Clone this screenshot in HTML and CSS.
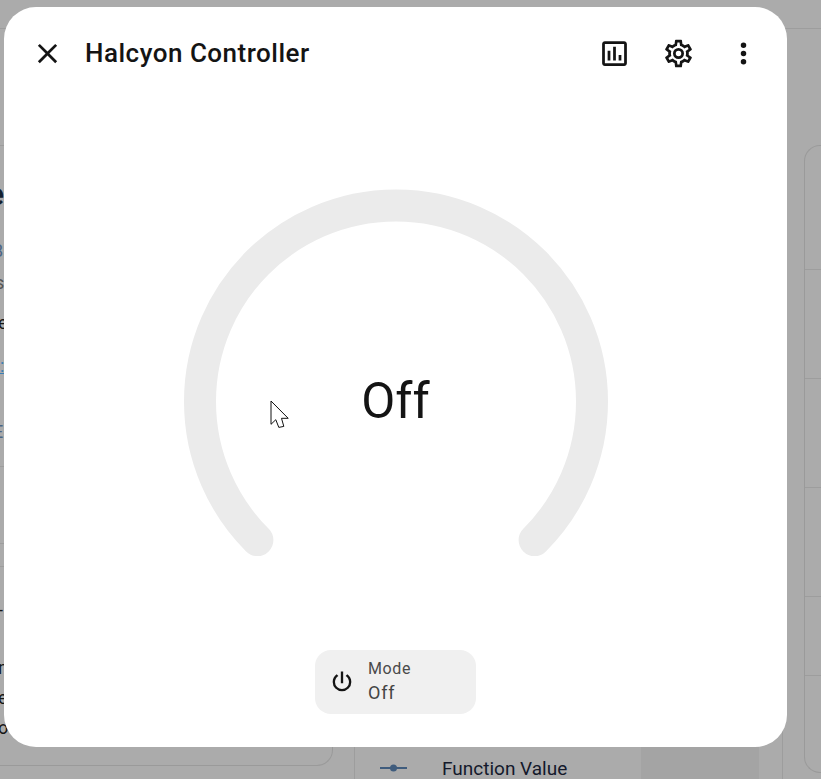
FILE: index.html
```html
<!DOCTYPE html>
<html lang="en">
<head>
<meta charset="utf-8">
<title>Halcyon Controller</title>
<link rel="stylesheet" href="styles.css">
</head>
<body>
<div class="page">
  <header class="topbar"></header>
  <main class="columns">
    <section class="left-card">
      <div class="block block-a"></div>
      <div class="block block-b">
        <div class="heading">e</div>
        <div class="line tone-blue gap-31">8</div>
        <div class="line tone-grey gap-12">s</div>
        <div class="line gap-20">e</div>
        <div class="line tone-link gap-23">:</div>
        <div class="line tone-blue gap-46">E:</div>
      </div>
      <div class="block block-c"></div>
      <div class="block block-d"></div>
      <div class="block block-e">
        <div class="line gap-33">-</div>
        <div class="line gap-38">n</div>
        <div class="line gap-10">e</div>
        <div class="line gap-10">o</div>
      </div>
    </section>
    <section class="center-col">
      <div class="value-row">
        <svg class="row-icon" viewBox="0 0 27 8" aria-hidden="true"><path d="M0 4H27" /><circle cx="13.5" cy="4" r="3.5" /></svg>
        <span class="row-label">Function Value</span>
        <span class="row-cell"></span>
      </div>
    </section>
    <section class="right-card">
      <div class="tile tile-1"></div>
      <div class="tile tile-2"></div>
      <div class="tile tile-3"></div>
      <div class="tile tile-4"></div>
      <div class="tile tile-5"></div>
      <div class="tile tile-6"></div>
    </section>
  </main>
</div>

<div class="dialog" role="dialog" aria-label="Halcyon Controller">
  <div class="dialog-head">
    <button class="icon-btn close-btn" aria-label="Close">
      <svg viewBox="0 0 24 24"><path d="M19,6.41L17.59,5L12,10.59L6.41,5L5,6.41L10.59,12L5,17.59L6.41,19L12,13.41L17.59,19L19,17.59L13.41,12L19,6.41Z"/></svg>
    </button>
    <h1 class="dialog-title">Halcyon Controller</h1>
    <button class="icon-btn" aria-label="History">
      <svg viewBox="0 0 24 24"><path d="M9 17H7V10H9V17M13 17H11V7H13V17M17 17H15V13H17V17M19 19H5V5H19V19.1M19 3H5C3.9 3 3 3.9 3 5V19C3 20.1 3.9 21 5 21H19C20.1 21 21 20.1 21 19V5C21 3.9 20.1 3 19 3Z"/></svg>
    </button>
    <button class="icon-btn" aria-label="Settings">
      <svg viewBox="0 0 24 24"><path d="M12,8A4,4 0 0,1 16,12A4,4 0 0,1 12,16A4,4 0 0,1 8,12A4,4 0 0,1 12,8M12,10A2,2 0 0,0 10,12A2,2 0 0,0 12,14A2,2 0 0,0 14,12A2,2 0 0,0 12,10M10,22C9.75,22 9.54,21.82 9.5,21.58L9.13,18.93C8.5,18.68 7.96,18.34 7.44,17.94L4.95,18.95C4.73,19.03 4.46,18.95 4.34,18.73L2.34,15.27C2.21,15.05 2.27,14.78 2.46,14.63L4.57,12.97L4.5,12L4.57,11L2.46,9.37C2.27,9.22 2.21,8.95 2.34,8.73L4.34,5.27C4.46,5.05 4.73,4.96 4.95,5.05L7.44,6.05C7.96,5.66 8.5,5.32 9.13,5.07L9.5,2.42C9.54,2.18 9.75,2 10,2H14C14.25,2 14.46,2.18 14.5,2.42L14.87,5.07C15.5,5.32 16.04,5.66 16.56,6.05L19.05,5.05C19.27,4.96 19.54,5.05 19.66,5.27L21.66,8.73C21.79,8.95 21.73,9.22 21.54,9.37L19.43,11L19.5,12L19.43,13L21.54,14.63C21.73,14.78 21.79,15.05 21.66,15.27L19.66,18.73C19.54,18.95 19.27,19.04 19.05,18.95L16.56,17.95C16.04,18.34 15.5,18.68 14.87,18.93L14.5,21.58C14.46,21.82 14.25,22 14,22H10M11.25,4L10.88,6.61C9.68,6.86 8.62,7.5 7.85,8.39L5.44,7.35L4.69,8.65L6.8,10.2C6.4,11.37 6.4,12.64 6.8,13.8L4.68,15.36L5.43,16.66L7.86,15.62C8.63,16.5 9.68,17.14 10.87,17.38L11.24,20H12.76L13.13,17.39C14.32,17.14 15.37,16.5 16.14,15.62L18.57,16.66L19.32,15.36L17.2,13.81C17.6,12.64 17.6,11.37 17.2,10.2L19.31,8.65L18.56,7.35L16.15,8.39C15.38,7.5 14.32,6.86 13.12,6.62L12.75,4H11.25Z"/></svg>
    </button>
    <button class="icon-btn" aria-label="More">
      <svg viewBox="0 0 24 24"><path d="M12,16A2,2 0 0,1 14,18A2,2 0 0,1 12,20A2,2 0 0,1 10,18A2,2 0 0,1 12,16M12,10A2,2 0 0,1 14,12A2,2 0 0,1 12,14A2,2 0 0,1 10,12A2,2 0 0,1 12,10M12,4A2,2 0 0,1 14,6A2,2 0 0,1 12,8A2,2 0 0,1 10,6A2,2 0 0,1 12,4Z"/></svg>
    </button>
  </div>

  <div class="gauge">
    <svg class="gauge-arc" viewBox="0 0 424 368" aria-hidden="true">
      <path d="M73.4 351.1A196 196 0 1 1 350.6 351.1"/>
    </svg>
    <div class="gauge-value">Off</div>
  </div>

  <div class="mode-chip">
    <svg class="mode-icon" viewBox="0 0 24 24"><path d="M16.56,5.44L15.11,6.89C16.84,7.94 18,9.83 18,12A6,6 0 0,1 12,18A6,6 0 0,1 6,12C6,9.83 7.16,7.94 8.88,6.88L7.44,5.44C5.36,6.88 4,9.28 4,12A8,8 0 0,0 12,20A8,8 0 0,0 20,12C20,9.28 18.64,6.88 16.56,5.44M13,3H11V13H13"/></svg>
    <div class="mode-text">
      <span class="mode-label">Mode</span>
      <span class="mode-value">Off</span>
    </div>
  </div>
</div>

<svg class="cursor" viewBox="0 0 20 30" aria-hidden="true">
  <path d="M1 1L18.2 18.3H11.5L13.8 26.4L8.8 27.4L5.8 19.7L1 24.3Z"/>
</svg>
</body>
</html>
```

FILE: styles.css
```css
* { box-sizing: border-box; }

html, body {
  margin: 0;
  height: 779px;
  overflow: hidden;
}

body {
  background: #ababab;
  font-family: Roboto, "Liberation Sans", sans-serif;
  position: relative;
}

.page {
  display: flex;
  flex-direction: column;
  height: 779px;
  overflow: hidden;
}

.topbar {
  height: 29px;
  flex: none;
  border-bottom: 1px solid #9d9d9d;
}

.columns {
  flex: 1;
  min-height: 0;
  display: grid;
  grid-template-columns: 333px 21px 429px 21px 1fr;
}

/* left card, almost entirely covered by the dialog */
.left-card {
  grid-column: 1;
  height: 737px;
  border-right: 1px solid #9a9a9a;
  border-bottom: 1px solid #9a9a9a;
  border-bottom-right-radius: 16px;
  display: flex;
  flex-direction: column;
  color: #161616;
  font-size: 18px;
  overflow: hidden;
}

.block { flex: none; border-bottom: 1px solid #9d9d9d; }
.block-a { height: 117px; }
.block-b { height: 321px; }
.block-c { height: 77px; }
.block-d { height: 23px; }
.block-e { flex: 1; border-bottom: 0; }

.heading {
  margin: 32px 0 0 -13px;
  height: 32px;
  line-height: 32px;
  font-size: 32px;
  font-weight: 500;
  color: #14202e;
}

.line { height: 20px; line-height: 20px; margin-left: -2px; }
.tone-blue { color: #4a6585; margin-left: -7px; }
.tone-grey { color: #555; margin-left: -5px; }
.tone-link { color: #3b7fb5; text-decoration: underline; margin-left: 0; }
.gap-10 { margin-top: 10px; }
.gap-12 { margin-top: 12px; }
.gap-20 { margin-top: 20px; }
.gap-23 { margin-top: 23px; }
.gap-31 { margin-top: 31px; }
.gap-33 { margin-top: 33px; }
.gap-38 { margin-top: 38px; }
.gap-46 { margin-top: 46px; }

/* centre column */
.center-col {
  grid-column: 3;
  border-left: 1px solid #9d9d9d;
  border-right: 1px solid #9d9d9d;
  display: flex;
  flex-direction: column;
  justify-content: flex-end;
  overflow: hidden;
}

.value-row {
  flex: none;
  height: 42px;
  margin-bottom: -10px;
  display: flex;
  align-items: center;
  padding-left: 25px;
}

.row-icon { width: 27px; height: 8px; flex: none; }
.row-icon path { stroke: #3f5c7d; stroke-width: 2; fill: none; }
.row-icon circle { fill: #3f5c7d; }

.row-label {
  margin-left: 35px;
  width: 199px;
  font-size: 19px;
  color: #14192b;
  white-space: nowrap;
}

.row-cell {
  width: 118px;
  height: 100%;
  background: #a4a4a4;
}

/* right card */
.right-card {
  grid-column: 5;
  margin-top: 116px;
  height: 628px;
  border: 1px solid #9a9a9a;
  border-right: 0;
  border-radius: 16px 0 0 16px;
  display: flex;
  flex-direction: column;
}

.tile { flex: none; border-bottom: 1px solid #9d9d9d; }
.tile-1 { height: 124px; }
.tile-2 { height: 109px; }
.tile-3 { height: 109px; }
.tile-4 { height: 109px; }
.tile-5 { height: 79px; }
.tile-6 { flex: 1; border-bottom: 0; }

/* dialog */
.dialog {
  position: absolute;
  left: 4px;
  top: 7px;
  width: 783px;
  height: 740px;
  background: #fff;
  border-radius: 32px;
  padding: 14px 11px 33px;
  display: flex;
  flex-direction: column;
  align-items: center;
  color: #141414;
}

.dialog-head {
  width: 100%;
  height: 64px;
  flex: none;
  display: flex;
  align-items: center;
}

.icon-btn {
  width: 64.75px;
  height: 64px;
  padding: 0;
  border: 0;
  background: none;
  flex: none;
  display: flex;
  align-items: center;
  justify-content: center;
}

.close-btn { width: 64px; }

.icon-btn svg { width: 33px; height: 33px; display: block; fill: #141414; }

.dialog-title {
  flex: 1;
  margin: 0 0 0 6px;
  font-size: 26px;
  letter-spacing: 0.5px;
  font-weight: 500;
  line-height: 32px;
  color: #141414;
}

.gauge {
  position: relative;
  margin-top: 104px;
  width: 424px;
  height: 368px;
  flex: none;
}

.gauge-arc { width: 424px; height: 368px; display: block; overflow: visible; }
.gauge-arc path { fill: none; stroke: #ebebeb; stroke-width: 32; stroke-linecap: round; }

.gauge-value {
  position: absolute;
  left: 0;
  right: 0;
  top: 184px;
  text-align: center;
  font-size: 49.5px;
  line-height: 56px;
  color: #141414;
}

.mode-chip {
  margin-top: 93px;
  width: 161px;
  height: 64px;
  flex: none;
  background: #f0f0f0;
  border-radius: 16px;
  display: flex;
  align-items: center;
  gap: 12px;
  padding-left: 13px;
}

.mode-icon { width: 28px; height: 28px; fill: #141414; flex: none; }

.mode-text { display: flex; flex-direction: column; }

.mode-label {
  font-size: 16px;
  line-height: 20px;
  letter-spacing: 0.6px;
  color: #4a4a4a;
}

.mode-value {
  font-size: 18px;
  line-height: 24px;
  margin-top: 2px;
  letter-spacing: 0.8px;
  color: #444;
}

.cursor {
  position: absolute;
  left: 270px;
  top: 400px;
  width: 20px;
  height: 30px;
}

.cursor path { fill: #fff; stroke: #111; stroke-width: 1; stroke-linejoin: miter; }
```
